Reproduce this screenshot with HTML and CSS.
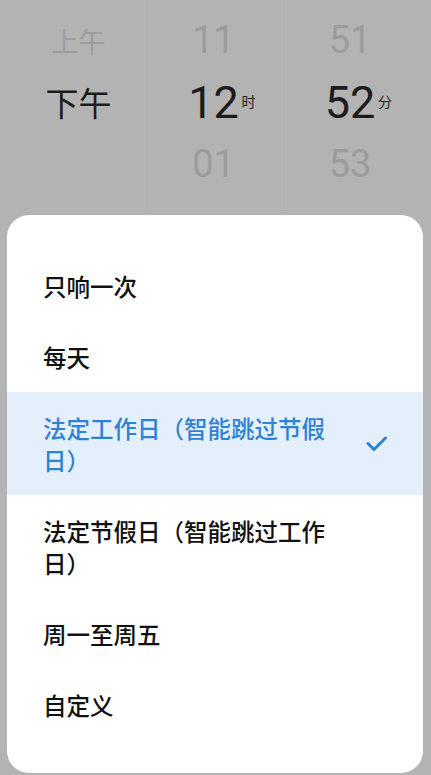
FILE: index.html
```html
<!DOCTYPE html>
<html lang="zh">
<head>
    <meta charset="utf-8">
    <title>重复</title>
    <link rel="stylesheet" href="styles.css">
</head>
<body>
    <div class="screen">
        <div class="picker">
            <div class="col col-ampm">
                <div class="cell faint">上午</div>
                <div class="cell current">下午</div>
                <div class="cell"></div>
            </div>
            <div class="col col-hour">
                <div class="cell faint num">11</div>
                <div class="cell current num">12<span class="unit">时</span></div>
                <div class="cell faint num">01</div>
            </div>
            <div class="col col-min">
                <div class="cell faint num">51</div>
                <div class="cell current num">52<span class="unit">分</span></div>
                <div class="cell faint num">53</div>
            </div>
        </div>

        <div class="sheet">
            <ul class="options">
                <li class="option"><span class="label">只响一次</span></li>
                <li class="option"><span class="label">每天</span></li>
                <li class="option double selected">
                    <span class="label">法定工作日（智能跳过节假日）</span>
                    <svg class="check" width="22" height="18" viewBox="0 0 22 18">
                        <path d="M2 8.5 L8 14.5 L19.5 3" fill="none" stroke="#2f82d2" stroke-width="3" stroke-linecap="round" stroke-linejoin="round"/>
                    </svg>
                </li>
                <li class="option double"><span class="label">法定节假日（智能跳过工作日）</span></li>
                <li class="option"><span class="label">周一至周五</span></li>
                <li class="option"><span class="label">自定义</span></li>
            </ul>
        </div>
    </div>
</body>
</html>
```

FILE: styles.css
```css
body {
    margin: 0;
    background-color: #b3b3b3;
    font-family: "Noto Sans CJK SC", "Noto Sans", sans-serif;
}

.screen {
    width: 431px;
    height: 775px;
    display: flex;
    flex-direction: column;
}

/* time picker behind the sheet */
.picker {
    height: 215px;
    display: flex;
}

.col {
    display: flex;
    flex-direction: column;
    box-sizing: border-box;
    padding-top: 9px;
}

.col-ampm {
    width: 145px;
    padding-left: 13px;
    border-right: 1px solid #b9b9b9;
}

.col-hour {
    width: 138px;
    border-right: 1px solid #b9b9b9;
}

.col-min {
    flex: 1;
    padding-right: 14px;
}

.cell {
    height: 62px;
    display: flex;
    align-items: center;
    justify-content: center;
    position: relative;
    color: #1c1c1c;
}

.col-ampm .cell {
    font-size: 27px;
}

.col-ampm .cell.current {
    font-size: 33px;
}

.cell.faint {
    color: #9c9c9c;
}

.cell.num {
    font-family: Roboto, "Noto Sans", sans-serif;
    font-size: 38px;
}

.cell.num.current {
    font-size: 45px;
}

.unit {
    position: absolute;
    left: calc(50% + 28px);
    top: 23px;
    font-family: "Noto Sans CJK SC", sans-serif;
    font-size: 14px;
    line-height: 14px;
    color: #222;
}

/* bottom sheet */
.sheet {
    margin: 0 8px 2px 7px;
    flex: 1;
    background-color: #fff;
    border-radius: 22px;
    overflow: hidden;
    padding: 35px 0 33px;
}

.options {
    list-style: none;
    margin: 0;
    padding: 0;
}

.option {
    height: 71px;
    display: flex;
    align-items: center;
    justify-content: space-between;
    padding: 0 36px 0 36px;
    font-size: 23.5px;
    font-weight: 500;
    line-height: 32px;
    color: #111;
}

.option.double {
    height: 103px;
}

.label {
    max-width: 295px;
}

.option.selected {
    background-color: #e3effb;
    color: #2f82d2;
}

.check {
    margin-right: -1px;
}
```
